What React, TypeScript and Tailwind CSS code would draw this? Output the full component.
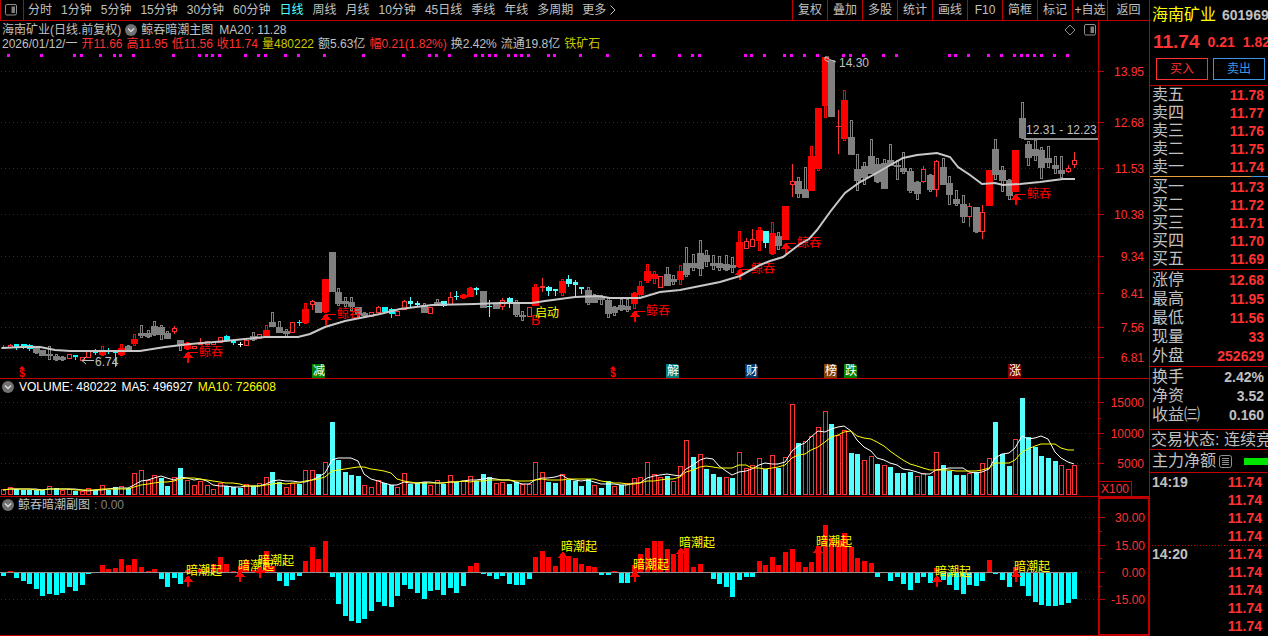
import React from "react";

type Candle = [kind: string, high: number, top: number, bottom: number, low: number];

const CANDLES: Candle[] = [
  ["r", 345, 347, 348, 348], ["r", 344, 345, 347, 347], ["c", 344, 344, 347, 349], ["c", 344, 344, 348, 348],
  ["c", 344, 345, 349, 350], ["g", 347, 347, 352, 353], ["g", 350, 350, 355, 355], ["g", 346, 354, 355, 359],
  ["g", 354, 356, 359, 360], ["g", 356, 357, 359, 360], ["r", 354, 354, 358, 358], ["c", 355, 355, 357, 359],
  ["r", 357, 357, 360, 360], ["r", 351, 351, 357, 357], ["c", 349, 352, 353, 354], ["R", 346, 351, 354, 355],
  ["c", 348, 350, 351, 353], ["c", 352, 352, 353, 366], ["R", 344, 348, 354, 355], ["g", 345, 346, 349, 350],
  ["R", 334, 339, 343, 345], ["g", 325, 333, 335, 337], ["g", 330, 333, 336, 337], ["g", 321, 326, 334, 335],
  ["g", 325, 327, 334, 339], ["g", 331, 333, 338, 338], ["r", 326, 328, 331, 333], ["g", 340, 340, 345, 350],
  ["R", 342, 343, 348, 349], ["r", 346, 346, 348, 348], ["r", 338, 342, 344, 344], ["r", 341, 341, 344, 344],
  ["r", 342, 342, 344, 344], ["r", 337, 337, 342, 342], ["c", 335, 336, 341, 341], ["c", 340, 341, 343, 344],
  ["w", 342, 344, 345, 346], ["r", 340, 340, 345, 345], ["g", 332, 336, 339, 340], ["r", 334, 334, 338, 338],
  ["R", 325, 330, 335, 337], ["g", 312, 322, 326, 326], ["g", 321, 327, 332, 332], ["g", 329, 331, 333, 336],
  ["r", 322, 322, 332, 332], ["c", 320, 322, 323, 325], ["R", 303, 309, 322, 323], ["r", 300, 301, 304, 309],
  ["g", 302, 302, 312, 312], ["R", 279, 279, 311, 312], ["g", 252, 252, 291, 291], ["g", 288, 292, 303, 305],
  ["g", 297, 301, 303, 306], ["g", 297, 302, 306, 310], ["g", 307, 307, 314, 316], ["g", 312, 313, 315, 317],
  ["r", 312, 312, 316, 316], ["r", 306, 307, 312, 312], ["c", 307, 307, 312, 312], ["c", 308, 309, 314, 317],
  ["r", 311, 311, 315, 315], ["r", 300, 301, 309, 309], ["c", 297, 301, 304, 306], ["c", 301, 303, 305, 306],
  ["g", 303, 305, 312, 312], ["r", 307, 307, 313, 313], ["g", 299, 302, 305, 305], ["c", 301, 301, 306, 306],
  ["r", 292, 297, 304, 304], ["c", 291, 296, 297, 299], ["R", 294, 295, 297, 298], ["R", 287, 288, 296, 296],
  ["c", 287, 288, 290, 294], ["g", 291, 291, 307, 307], ["c", 300, 306, 307, 316], ["g", 304, 304, 308, 308],
  ["r", 298, 300, 306, 309], ["c", 297, 298, 303, 307], ["g", 300, 303, 314, 316], ["g", 311, 315, 316, 320],
  ["r", 307, 307, 316, 316], ["R", 284, 287, 305, 305], ["t", 278, 286, 288, 291], ["c", 286, 287, 291, 295],
  ["c", 289, 289, 291, 295], ["R", 279, 281, 292, 295], ["c", 275, 279, 284, 286], ["c", 280, 282, 285, 296],
  ["c", 287, 287, 289, 293], ["g", 287, 290, 302, 304], ["g", 294, 296, 302, 302], ["g", 295, 297, 299, 304],
  ["g", 298, 300, 313, 317], ["g", 306, 307, 312, 315], ["g", 299, 305, 309, 310], ["g", 299, 306, 309, 311],
  ["R", 292, 293, 303, 308], ["R", 281, 286, 294, 297], ["R", 264, 271, 280, 282], ["R", 271, 274, 278, 283],
  ["r", 276, 276, 287, 287], ["g", 267, 274, 285, 285], ["g", 275, 279, 281, 284], ["R", 265, 271, 279, 284],
  ["g", 247, 263, 274, 276], ["g", 254, 263, 267, 270], ["g", 240, 253, 268, 275], ["g", 250, 255, 261, 266],
  ["g", 255, 263, 265, 269], ["g", 256, 263, 267, 270], ["g", 255, 264, 269, 270], ["g", 257, 265, 267, 272],
  ["R", 231, 242, 266, 267], ["r", 238, 241, 248, 248], ["r", 229, 239, 246, 246], ["R", 227, 230, 240, 250],
  ["c", 231, 231, 243, 247], ["R", 222, 233, 253, 254], ["g", 232, 236, 245, 249], ["R", 206, 206, 239, 239],
  ["r", 164, 181, 184, 196], ["g", 177, 181, 193, 197], ["g", 167, 189, 197, 197], ["R", 146, 156, 190, 190],
  ["R", 108, 108, 168, 170], ["R", 57, 57, 105, 117], ["g", 60, 60, 116, 116], ["t", 110, 126, 127, 153],
  ["R", 90, 100, 138, 140], ["g", 120, 137, 154, 154], ["g", 154, 169, 180, 190], ["g", 162, 166, 177, 184],
  ["g", 139, 156, 173, 173], ["g", 158, 164, 181, 182], ["g", 159, 163, 188, 188], ["g", 144, 160, 165, 165],
  ["g", 160, 165, 166, 179], ["g", 152, 168, 171, 173], ["g", 168, 171, 190, 192], ["g", 181, 182, 193, 199],
  ["r", 166, 169, 181, 182], ["g", 174, 175, 189, 191], ["r", 160, 161, 189, 196], ["g", 158, 167, 184, 184],
  ["g", 176, 183, 194, 204], ["g", 190, 199, 203, 205], ["g", 195, 204, 216, 222], ["r", 203, 206, 216, 226],
  ["g", 207, 207, 231, 232], ["r", 205, 212, 231, 238], ["R", 170, 170, 205, 205], ["g", 139, 149, 174, 179],
  ["g", 166, 170, 180, 191], ["g", 179, 180, 195, 199], ["R", 150, 150, 191, 191], ["g", 102, 118, 137, 138],
  ["g", 141, 144, 157, 165], ["g", 140, 149, 155, 160], ["g", 147, 150, 167, 178], ["g", 146, 158, 162, 167],
  ["g", 156, 165, 168, 173], ["g", 156, 170, 173, 177], ["r", 165, 168, 171, 172], ["r", 152, 160, 164, 167],
];

const VOLUMES = (
  "r5 r7 c6 c5 c5 c5 c5 r8 c7 r4 r5 c4 r3 r6 c5 r9 c5 c8 r8 c7 r21 r24 r14 r19 c17 c9 r17 c27 r14 r9 r13 r9 r5 r11 c9 c8 c7 r10 c9 r11 " +
  "r17 c23 c13 r7 r11 c11 r24 r24 c21 r32 c73 c35 c23 c20 c19 r9 r7 r14 c12 c10 r7 r21 c11 c12 c13 r9 r14 c11 r19 c13 r13 r18 c14 c21 c18 r11 r12 c11 c13 r10 " +
  "r10 r32 r22 c13 c12 r20 c15 c14 c9 c16 r9 c7 c14 r8 c10 r11 r16 r17 r32 r20 r17 c19 r13 r28 r54 c38 r40 c26 c21 c18 r17 c17 r42 r26 r29 r36 c26 r39 c27 r37 " +
  "r90 c52 r53 r58 r67 r83 c71 r59 r64 c42 c41 r34 r38 c31 r29 c28 c22 c22 c23 r18 r21 c19 r42 c30 c24 c20 c20 r21 c23 r31 r36 c73 c41 c29 r55 c97 c58 c48 c39 c37 c34 r29 r25 r29"
)
  .split(" ")
  .map((s) => ({ up: s[0] === "r", h: Number(s.slice(1)) }));

const WAVE = [
  -4, 1, -6, -9, -12, -17, -24, -22, -23, -21, -15, -19, -13, -2, 0, 7, 3, 4, 13, 7, 13, 5, 1, 3, -7, -15, -6, -12, 2, 0,
  3, 4, 8, 15, 8, 1, 6, 11, 2, 5, 21, 6, -9, -14, -8, -4, 11, 25, 13, 31, -5, -32, -44, -49, -51, -47, -39, -30, -34, -35,
  -24, -13, -17, -21, -27, -19, -18, -23, -16, -21, -14, 6, 9, -2, -4, -7, -4, -12, -13, -13, -7, 15, 21, 15, 6, 18, 16, 14, 8, 6,
  5, -3, -3, 1, -11, -11, 7, 18, 24, 31, 31, 23, 18, 22, 24, 5, 8, 0, -7, -12, -15, -25, -8, -5, -5, 11, 7, 15, 7, 20,
  23, 10, 5, 10, 26, 47, 34, 32, 39, 25, 14, 11, 9, -5, 0, -9, -5, -12, -18, -11, -5, -11, 4, -8, -13, -18, -22, -13, -14, -9,
  12, -2, -8, -15, 5, -14, -24, -30, -33, -34, -34, -33, -31, -27,
];

const SIGNAL_DOTS = [
  8, 41, 74, 81, 100, 114, 120, 133, 173, 199, 206, 212, 219, 245, 258, 265, 285, 298, 324, 363, 403, 429, 436, 449, 475, 482,
  489, 495, 508, 515, 521, 528, 548, 554, 580, 607, 640, 653, 679, 692, 699, 745, 751, 764, 784, 791, 804, 817, 843, 850, 863,
  883, 896, 949, 955, 968, 988, 1001, 1014, 1021, 1027, 1034, 1041, 1054, 1067,
];

const MA20 =
  "2,348 22,347 40,347 55,350 70,351 140,351 165,347 190,344 215,342 245,339 265,337 298,337 310,334 325,327 345,321 380,314 400,309 432,305 475,304 500,303 532,303 545,301 575,297 598,296 610,298 640,298 660,292 680,290 700,286 720,282 740,276 760,265 770,261 783,257 800,244 809,239 817,230 830,212 845,193 860,182 875,174 887,167 903,158 917,155 937,153 950,157 958,167 970,175 982,184 995,183 1003,185 1020,184 1040,182 1063,179 1075,179";

const PRICE_TICKS: [number, string][] = [
  [71, "13.95"], [122, "12.68"], [168, "11.53"], [214, "10.38"], [256, "9.34"], [293, "8.41"], [327, "7.56"], [357, "6.81"],
];
const VOLUME_TICKS: [number, string][] = [[402, "15000"], [433, "10000"], [463, "5000"]];
const WAVE_TICKS: [number, string][] = [[517, "30.00"], [545, "15.00"], [572, "0.00"], [599, "-15.00"]];

const WHALE_SIGNALS = [[188, 351], [326, 313], [635, 310], [740, 268], [786, 242], [1016, 193]];
const WAVE_SIGNALS = [
  [188, 575, 570], [240, 570, 565], [260, 566, 560], [563, 551, 546], [635, 570, 564], [681, 547, 542], [818, 546, 541],
  [937, 575, 571], [1016, 570, 566],
];

const BADGES: [number, string, string][] = [
  [312, "减", "#008000"], [666, "解", "#008080"], [745, "财", "#003468"], [824, "榜", "#804000"], [844, "跌", "#008000"], [1008, "涨", "#800000"],
];

const PERIODS = ["分时", "1分钟", "5分钟", "15分钟", "30分钟", "60分钟", "日线", "周线", "月线", "10分钟", "45日线", "季线", "年线", "多周期", "更多"];
const TOOLS = ["复权", "叠加", "多股", "统计", "画线", "F10", "简框", "标记", "+自选", "返回"];

const QUOTE: [string, string][] = [
  ["开11.66", "text-[#ff3232]"], ["高11.95", "text-[#ff3232]"], ["低11.56", "text-[#ff3232]"], ["收11.74", "text-[#ff3232]"],
  ["量480222", "text-[#c8c800]"], ["额5.63亿", ""], ["幅0.21(1.82%)", "text-[#ff3232]"], ["换2.42%", ""], ["流通19.8亿", ""],
  ["铁矿石", "text-[#c8c800]"],
];

const ASKS: [string, string][] = [["卖五", "11.78"], ["卖四", "11.77"], ["卖三", "11.76"], ["卖二", "11.75"], ["卖一", "11.74"]];
const BIDS: [string, string][] = [["买一", "11.73"], ["买二", "11.72"], ["买三", "11.71"], ["买四", "11.70"], ["买五", "11.69"]];
const STATS: [string, string][] = [["涨停", "12.68"], ["最高", "11.95"], ["最低", "11.56"], ["现量", "33"], ["外盘", "252629"]];
const RATIOS: [string, string][] = [["换手", "2.42%"], ["净资", "3.52"], ["收益㈢", "0.160"]];
const TRADES = ["14:19", "", "", "", "14:20", "", "", "", ""];

const barX = (i: number) => Math.round(3 + i * 6.572);

function average(days: number) {
  return VOLUMES.map((_, i) => {
    const part = VOLUMES.slice(Math.max(0, i - days + 1), i + 1);
    const mean = part.reduce((sum, v) => sum + v.h, 0) / part.length;
    return `${barX(i)},${Math.round(495 - mean)}`;
  }).join(" ");
}

function GridLines({ ticks }: { ticks: [number, string][] }) {
  return (
    <g stroke="#a00000" strokeDasharray="1 3" shapeRendering="crispEdges">
      {ticks.map(([y]) => (
        <line key={y} x1="1" x2="100%" y1={y + 0.5} y2={y + 0.5} />
      ))}
    </g>
  );
}

function Axis({ top, height, ticks, minor = [] }: { top: number; height: number; ticks: [number, string][]; minor?: number[] }) {
  return (
    <svg width="50" height={height} className="block">
      <g transform={`translate(0 ${-top})`}>
        <g stroke="#c00000" shapeRendering="crispEdges">
          {ticks.map(([y]) => (
            <line key={y} x1="0" x2="5" y1={y + 0.5} y2={y + 0.5} />
          ))}
          {minor.map((y) => (
            <line key={y} x1="0" x2="2" y1={y + 0.5} y2={y + 0.5} />
          ))}
        </g>
        <g fill="#ff3232" fontSize="12" textAnchor="end">
          {ticks.map(([y, label]) => (
            <text key={y} x="45" y={y + 5}>{label}</text>
          ))}
        </g>
      </g>
    </svg>
  );
}

function CandleShape({ i, c }: { i: number; c: Candle }) {
  const [kind, high, top, bottom, low] = c;
  const x = barX(i);
  const color = { g: "#808080", R: "#ff0000", r: "#ff3232", c: i > 60 ? "#54ffff" : "#00ffff", w: "#ffffff", t: "#ff3232" }[kind]!;
  if (kind === "r") {
    return (
      <g>
        <rect x={x - 1.5} y={top + 0.5} width="4" height={Math.max(1, bottom - top)} fill="#000" stroke={color} />
        {high < top && <rect x={x} y={high} width="1" height={top - high} fill={color} />}
        {low > bottom && <rect x={x} y={bottom + 1} width="1" height={low - bottom} fill={color} />}
      </g>
    );
  }
  if (kind === "c" || kind === "w" || kind === "t") {
    const wide = bottom - top > 3 ? 5 : 4;
    return (
      <g fill={color}>
        <rect x={x} y={high} width="1" height={low - high + 1} />
        <rect x={x - 2} y={top} width={wide + 1} height={Math.max(1, bottom - top)} />
      </g>
    );
  }
  return (
    <g>
      <rect x={x - 0.5} y={high + 0.5} width="2" height={Math.max(0, low - high)} fill="#000" stroke={color} />
      <rect x={x - 3} y={top} width="7" height={Math.max(1, bottom - top + 1)} fill={color} />
    </g>
  );
}

function UpArrow({ x, y }: { x: number; y: number }) {
  return <path d={`M${x} ${y}l5 7h-4v5h-2v-5h-4z`} fill="#ff0000" shapeRendering="crispEdges" />;
}

function Chevron() {
  return (
    <svg width="12" height="12" viewBox="0 0 12 12" className="block shrink-0">
      <circle cx="6" cy="6" r="6" fill="#707070" />
      <path d="M3 4.5l3 3 3-3" fill="none" stroke="#d8d8d8" strokeWidth="1.5" />
    </svg>
  );
}

function PanelIcon() {
  return (
    <svg width="12" height="12" viewBox="0 0 12 12" className="block">
      <rect x="0.5" y="0.5" width="11" height="10.5" rx="1.5" fill="none" stroke="#909090" />
      <rect x="6.5" y="2.5" width="3.5" height="6.5" fill="#808080" />
    </svg>
  );
}

function PriceChart() {
  return (
    <svg width="100%" height="327" className="block" role="img" aria-label="日线">
      <g transform="translate(0 -51)">
        <GridLines ticks={PRICE_TICKS} />
        <g fill="#ff00ff" shapeRendering="crispEdges">
          {SIGNAL_DOTS.map((x) => (
            <rect key={x} x={x - 1} y="54" width="3" height="3" />
          ))}
        </g>
        <g shapeRendering="crispEdges">
          {CANDLES.map((c, i) => (
            <CandleShape key={i} i={i} c={c} />
          ))}
        </g>
        <g fontSize="12" fill="#ff0000">
          {WHALE_SIGNALS.map(([x, y]) => (
            <g key={x}>
              <UpArrow x={x} y={y} />
              <path d={`M${x} ${y + 1.5}h10`} stroke="#ff0000" shapeRendering="crispEdges" />
              <text x={x + 11} y={y + 5}>鲸吞</text>
            </g>
          ))}
        </g>
        <polyline points={MA20} fill="none" stroke="#c8c8c8" strokeWidth="2" />
        <g fill="#c0c0c0" fontSize="12">
          <path d="M94 360.5H82M86 357l-4 3.500 4 3.500M836 62l-4-1.500-7-3.500M829 57h-4v3l4 2" fill="none" stroke="#c0c0c0" />
          <text x="95" y="366">6.74</text>
          <text x="839" y="67">14.30</text>
          <text x="1026" y="134">12.31 - 12.23</text>
        </g>
        <rect x="1024" y="138" width="200" height="2" fill="#909090" />
        <text x="531" y="325" fontSize="14" fill="#ff0000">B</text>
        <text x="535" y="317" fontSize="12" fill="#ffff00">启动</text>
        {[22, 613].map((x) => (
          <g key={x} fill="#ff0000">
            <path d={`M${x} 366l3 3h-6z`} />
            <text x={x} y="377" fontSize="10" fontWeight="700" textAnchor="middle">$</text>
          </g>
        ))}
        {BADGES.map(([x, label, color]) => (
          <g key={x}>
            <path d={`M${x} 364h11l2 2v12h-13z`} fill={color} />
            <text x={x + 1} y="375" fontSize="12" fill="#fff">{label}</text>
          </g>
        ))}
      </g>
    </svg>
  );
}

function VolumeChart() {
  return (
    <svg width="100%" height="101" className="block" role="img" aria-label="VOLUME">
      <g transform="translate(0 -395)">
        <GridLines ticks={VOLUME_TICKS} />
        <g shapeRendering="crispEdges">
          {VOLUMES.map((v, i) =>
            v.up ? (
              <rect key={i} x={barX(i) - 1.5} y={495 - v.h - 0.5} width="4" height={v.h} fill="#000" stroke="#ff3232" />
            ) : (
              <rect key={i} x={barX(i) - 2} y={495 - v.h} width="5" height={v.h} fill="#54ffff" />
            ),
          )}
        </g>
        <polyline points={average(5)} fill="none" stroke="#ffffff" />
        <polyline points={average(10)} fill="none" stroke="#ffff00" />
      </g>
    </svg>
  );
}

function WaveChart() {
  return (
    <svg width="100%" height="122" className="block" role="img" aria-label="鲸吞暗潮副图">
      <g transform="translate(0 -513)">
        <GridLines ticks={WAVE_TICKS} />
        <g shapeRendering="crispEdges">
          {WAVE.map((h, i) => (
            <rect key={i} x={barX(i) - 2} y={h > 0 ? 572 - h : 572} width="5" height={Math.abs(h)} fill={h > 0 ? "#ff0000" : "#00ffff"} />
          ))}
          <rect x="0" y="572" width="1074" height="1" fill="#909090" />
        </g>
        {WAVE_SIGNALS.map(([x, y, label]) => (
          <g key={x}>
            <UpArrow x={x} y={y} />
            <text x={x - 2} y={label + 5} fontSize="12" fill="#ffff00">暗潮起</text>
          </g>
        ))}
      </g>
    </svg>
  );
}

function Rows({ rows, row, value }: { rows: [string, string][]; row: string; value: string }) {
  return (
    <dl>
      {rows.map(([name, amount]) => (
        <div key={name} className={`flex items-center justify-between pl-0.5 pr-1 ${row}`}>
          <dt className="text-base leading-4">{name}</dt>
          <dd className={`text-sm leading-4 font-bold ${value}`}>{amount}</dd>
        </div>
      ))}
    </dl>
  );
}

function SidePanel() {
  return (
    <aside className="w-[119px] shrink-0 overflow-hidden border-l border-[#c00000] whitespace-nowrap">
      <div className="flex h-[30px] items-center gap-1.5 pl-0.5">
        <h1 className="text-base leading-4 text-[#ffff00]">海南矿业</h1>
        <span className="text-sm leading-4 font-bold">601969</span>
      </div>
      <div className="flex h-6 items-center gap-2 pl-[3px] font-bold text-[#ff3232]">
        <span className="text-[19px] leading-6">11.74</span>
        <span className="text-sm leading-6">0.21</span>
        <span className="text-sm leading-6">1.82%</span>
      </div>
      <div className="flex gap-[5px] px-1.5 pt-1 pb-[5px] text-xs">
        <button className="h-[22px] w-[52px] shrink-0 border border-[#ff3232] leading-5 text-[#ff3232]">买入</button>
        <button className="h-[22px] w-[52px] shrink-0 border border-[#3c96e6] leading-5 text-[#3c96e6]">卖出</button>
      </div>
      <section className="border-t border-[#c00000]">
        <Rows rows={ASKS} row="h-[18px]" value="text-[#ff3232]" />
        <div className="mb-px flex h-px">
          <div className="w-[101px] bg-[#e6a03c]" />
          <div className="flex-1 bg-[#3c96e6]" />
        </div>
        <Rows rows={BIDS} row="h-[18px]" value="text-[#ff3232]" />
      </section>
      <section className="mt-px border-t border-[#c00000]">
        <Rows rows={STATS} row="h-[19px]" value="text-[#ff3232]" />
      </section>
      <section className="mt-px border-t border-[#c00000] pb-[5px]">
        <Rows rows={RATIOS} row="h-[19px]" value="" />
      </section>
      <p className="h-5 border-t border-[#c00000] pl-px text-base leading-[19px]">交易状态: 连续竞价</p>
      <div className="flex h-[23px] items-center border-t border-[#c00000] pl-0.5">
        <span className="text-base leading-4">主力净额</span>
        <svg width="13" height="13" viewBox="0 0 13 13" className="ml-[3px] block shrink-0" fill="none" stroke="#909090">
          <rect x="0.5" y="0.5" width="12" height="12" rx="2" />
          <path d="M3 3.500h7M3 5.500h7M3 7.500h7M3 9.500h7" />
        </svg>
        <div className="ml-3 h-[7px] w-10 shrink-0 bg-[#00e600]" />
      </div>
      <ol className="border-t border-[#c00000]">
        {TRADES.map((time, i) => (
          <li key={i} className="relative flex h-[18px] items-center justify-between pl-0.5 pr-1.5 text-sm leading-4 font-bold">
            {i === 4 && (
              <svg width="100%" height="1" className="absolute top-0 left-0">
                <line x1="2" x2="100%" y1="0.5" y2="0.5" stroke="#c00000" strokeDasharray="1 2" />
              </svg>
            )}
            <time>{time}</time>
            <span className="text-[#ff3232]">11.74</span>
          </li>
        ))}
      </ol>
    </aside>
  );
}

export default function App() {
  return (
    <div className="flex min-h-screen overflow-hidden bg-black font-['Liberation_Sans','Noto_Sans_CJK_SC',sans-serif] text-xs text-[#c0c0c0]">
      <main className="min-w-0 flex-1 whitespace-nowrap">
        <nav className="flex h-[21px] border-b border-[#c00000]">
          <button aria-label="面板" className="flex h-5 w-6 shrink-0 items-center border-x border-[#c00000] pl-1">
            <PanelIcon />
          </button>
          <div className="flex gap-[9px] pl-1">
            {PERIODS.map((name) => (
              <button key={name} className={`flex items-center leading-5 ${name === "日线" ? "text-[#54ffff]" : ""}`}>
                {name}
                {name === "更多" && (
                  <svg width="6" height="10" viewBox="0 0 6 10" className="ml-1 block" fill="none" stroke="#c0c0c0">
                    <path d="M0.500 0.500L5 5L0.500 9.500" />
                  </svg>
                )}
              </button>
            ))}
          </div>
          <div className="ml-auto flex">
            {TOOLS.map((name) => (
              <button key={name} className={`shrink-0 border-l border-[#c00000] leading-5 ${name === "返回" ? "w-[42px]" : "w-[35px]"}`}>
                {name}
              </button>
            ))}
          </div>
        </nav>

        <section className="flex border-b border-[#c00000]">
          <div className="min-w-0 flex-1 overflow-hidden">
            <header className="h-[30px] pt-px pl-0.5">
              <div className="flex items-center leading-4">
                <h2>海南矿业(日线.前复权)</h2>
                <span className="mx-1"><Chevron /></span>
                <span>鲸吞暗潮主图</span>
                <span className="ml-1.5">MA20: 11.28</span>
                <span className="ml-auto flex items-center gap-2 pr-0.5">
                  <svg width="12" height="12" viewBox="0 0 12 12" className="block" fill="none" stroke="#909090">
                    <path d="M6 1l5 5-5 5-5-5z" />
                  </svg>
                  <PanelIcon />
                </span>
              </div>
              <div className="flex gap-1 leading-[13px]">
                <time>2026/01/12/一</time>
                {QUOTE.map(([text, color]) => (
                  <span key={text} className={color}>{text}</span>
                ))}
              </div>
            </header>
            <PriceChart />
          </div>
          <div className="w-[51px] shrink-0 border-l border-[#c00000]">
            <Axis top={21} height={357} ticks={PRICE_TICKS} />
          </div>
        </section>

        <section className="flex border-b border-[#c00000]">
          <div className="min-w-0 flex-1 overflow-hidden">
            <header className="flex h-4 items-center gap-[5px] pl-0.5 leading-4 text-white">
              <Chevron />
              <span>VOLUME: 480222</span>
              <span>MA5: 496927</span>
              <span className="text-[#ffff00]">MA10: 726608</span>
            </header>
            <VolumeChart />
          </div>
          <div className="flex w-[51px] shrink-0 flex-col border-l border-[#c00000]">
            <Axis top={379} height={102} ticks={VOLUME_TICKS} minor={[418, 448]} />
            <span className="h-[15px] w-[33px] border-t border-r border-[#c00000] pl-0.5 leading-[15px] text-[#ff3232]">X100</span>
          </div>
        </section>

        <section className="flex border-b border-[#c00000]">
          <div className="min-w-0 flex-1 overflow-hidden">
            <header className="flex h-4 items-center gap-1 pl-0.5 leading-4">
              <Chevron />
              <span>鲸吞暗潮副图</span>
              <span className="text-[#808080]">: 0.00</span>
            </header>
            <WaveChart />
          </div>
          <div className="w-[51px] shrink-0 border-2 border-r border-b border-[#c00000]">
            <Axis top={499} height={135} ticks={WAVE_TICKS} minor={[531, 558, 586]} />
          </div>
        </section>
      </main>
      <SidePanel />
    </div>
  );
}
